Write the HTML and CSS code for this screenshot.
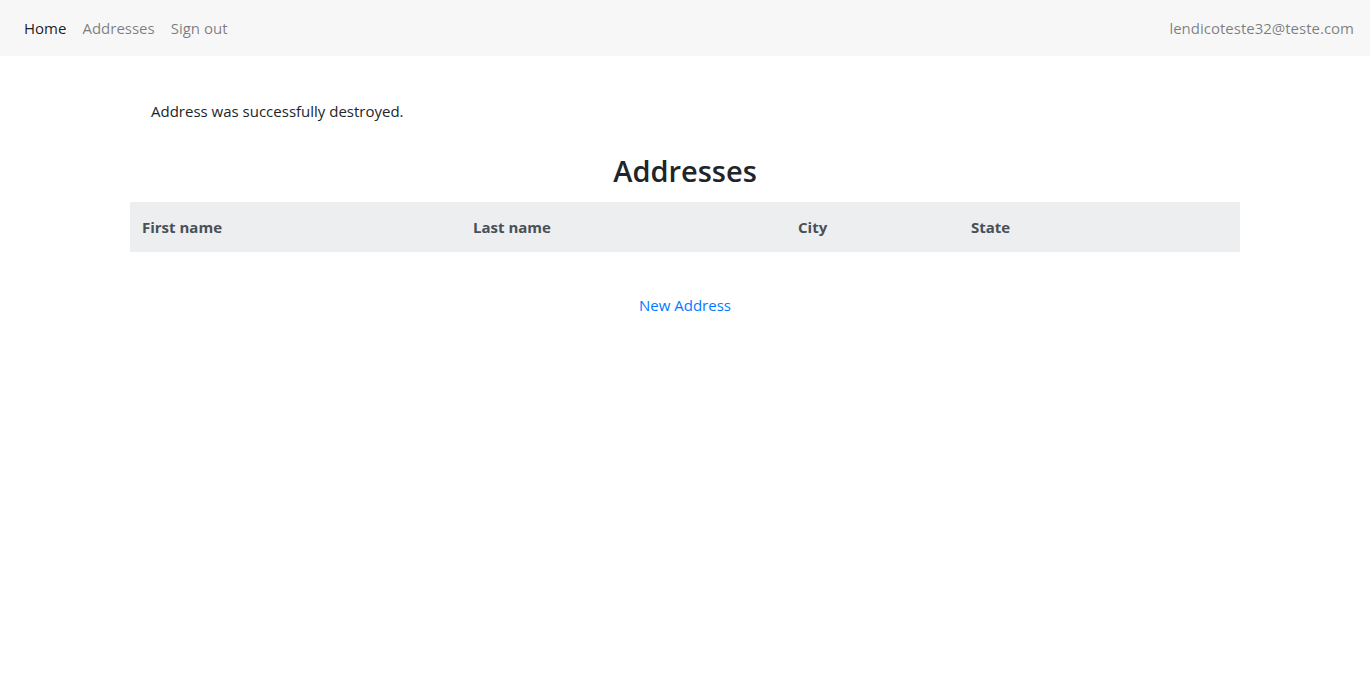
FILE: index.html
```html
<!DOCTYPE html>
<html lang="en">
<head>
<meta charset="utf-8">
<title>Addresses</title>
<link rel="stylesheet" href="styles.css">
</head>
<body>
<nav class="navbar">
  <ul class="nav-links">
    <li><a class="nav-link active" href="#">Home</a></li>
    <li><a class="nav-link" href="#">Addresses</a></li>
    <li><a class="nav-link" href="#">Sign out</a></li>
  </ul>
  <span class="navbar-text">lendicoteste32@teste.com</span>
</nav>
<main class="container">
  <p class="alert">Address was successfully destroyed.</p>
  <h1 class="title">Addresses</h1>
  <table class="table">
    <thead>
      <tr>
        <th class="col-first">First name</th>
        <th class="col-last">Last name</th>
        <th class="col-city">City</th>
        <th class="col-state">State</th>
      </tr>
    </thead>
    <tbody></tbody>
  </table>
  <div class="actions"><a class="new-link" href="#">New Address</a></div>
</main>
</body>
</html>
```
FILE: styles.css
```css
* { box-sizing: border-box; }
html, body { margin: 0; padding: 0; }
body {
  font-family: "Open Sans", "Noto Sans", "Liberation Sans", sans-serif;
  font-size: 15px;
  line-height: 24px;
  color: #212529;
  background: #fff;
}
.navbar {
  display: flex;
  align-items: center;
  justify-content: space-between;
  height: 56px;
  padding: 8px 16px;
  background: #f7f7f7;
}
.nav-links {
  display: flex;
  list-style: none;
  margin: 0;
  padding: 0;
}
.nav-link {
  display: block;
  padding: 8px;
  color: rgba(0,0,0,.5);
  text-decoration: none;
}
.nav-link.active { color: rgba(0,0,0,.9); }
.navbar-text { color: rgba(0,0,0,.5); }
.container {
  max-width: 1140px;
  margin: 0 auto;
  padding: 30px 15px 0;
}
.alert {
  margin: 0 0 16px;
  padding: 12px 20px;
  border: 1px solid transparent;
}
.title {
  margin: 0 0 12px;
  text-align: center;
  font-size: 29px;
  font-weight: 600;
  line-height: 38px;
}
.table {
  width: 100%;
  border-collapse: collapse;
  margin-bottom: 16px;
}
.table th {
  text-align: left;
  padding: 11px 12px 12px;
  background: #eceef0;
  color: #495057;
  font-weight: 700;
  line-height: 24px;
  height: 50px;
}
.col-first { width: 331px; }
.col-last { width: 325px; }
.col-city { width: 173px; }
.actions {
  text-align: center;
  padding-top: 25px;
}
.new-link {
  color: #007bff;
  text-decoration: none;
}
```
